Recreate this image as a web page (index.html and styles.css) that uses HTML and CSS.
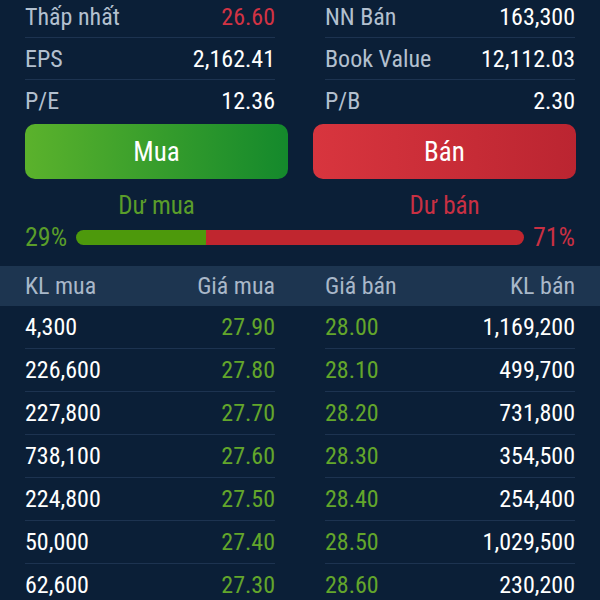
FILE: index.html
```html
<!DOCTYPE html>
<html lang="vi">
<head>
  <meta charset="UTF-8">
  <title>Chi tiết mã</title>
  <meta name="viewport" content="width=device-width, initial-scale=1">
  <link rel="stylesheet" href="styles.css">
</head>
<body>
  <div class="screen">
    <div class="stats">
      <div class="stat"><span class="label">Thấp nhất</span><span class="value down">26.60</span></div>
      <div class="stat"><span class="label">NN Bán</span><span class="value">163,300</span></div>
      <div class="stat"><span class="label">EPS</span><span class="value">2,162.41</span></div>
      <div class="stat"><span class="label">Book Value</span><span class="value">12,112.03</span></div>
      <div class="stat last"><span class="label">P/E</span><span class="value">12.36</span></div>
      <div class="stat last"><span class="label">P/B</span><span class="value">2.30</span></div>
    </div>

    <div class="actions">
      <button class="btn btn-buy">Mua</button>
      <button class="btn btn-sell">Bán</button>
    </div>

    <div class="balance">
      <div class="balance-labels">
        <span class="buy-text">Dư mua</span>
        <span class="sell-text">Dư bán</span>
      </div>
      <div class="balance-bar">
        <span class="pct buy-text">29%</span>
        <div class="bar">
          <div class="bar-buy" style="width:29%"></div>
          <div class="bar-sell"></div>
        </div>
        <span class="pct sell-text">71%</span>
      </div>
    </div>

    <div class="book-head">
      <div class="half"><span>KL mua</span><span>Giá mua</span></div>
      <div class="half"><span>Giá bán</span><span>KL bán</span></div>
    </div>
    <div class="book" id="book"></div>
  </div>

  <script>
    const rows = [
      ['4,300', '27.90', '28.00', '1,169,200'],
      ['226,600', '27.80', '28.10', '499,700'],
      ['227,800', '27.70', '28.20', '731,800'],
      ['738,100', '27.60', '28.30', '354,500'],
      ['224,800', '27.50', '28.40', '254,400'],
      ['50,000', '27.40', '28.50', '1,029,500'],
      ['62,600', '27.30', '28.60', '230,200']
    ];
    let html = '';
    rows.forEach(function(r) {
      html += `<div class='book-row'>` +
              `<div class='half'><span class='qty'>${r[0]}</span><span class='price'>${r[1]}</span></div>` +
              `<div class='half'><span class='price'>${r[2]}</span><span class='qty'>${r[3]}</span></div>` +
              `</div>`;
    });
    document.getElementById('book').innerHTML = html;
  </script>
</body>
</html>
```

FILE: styles.css
```css
body {
  margin: 0;
  padding: 0;
  background: #0b1f37;
  font-family: 'Roboto', 'Liberation Sans', sans-serif;
  font-stretch: 85%;
  color: #fff;
}
.screen {
  width: 600px;
  height: 600px;
  overflow: hidden;
  background: #0b1f37;
}
.stats {
  display: grid;
  grid-template-columns: 1fr 1fr;
  column-gap: 50px;
  padding: 0 25px;
  margin-top: -4px;
}
.stat {
  display: flex;
  justify-content: space-between;
  align-items: center;
  height: 41px;
  border-bottom: 1px solid #1d3350;
  font-size: 24px;
}
.stat.last {
  border-bottom: none;
  height: 42px;
}
.label {
  color: #b3c0cf;
}
.value {
  color: #fff;
}
.value.down {
  color: #d23344;
}
.actions {
  display: grid;
  grid-template-columns: 263px 263px;
  column-gap: 25px;
  padding: 0 25px;
  margin-top: 2px;
}
.btn {
  height: 55px;
  border: none;
  border-radius: 10px;
  color: #fff;
  font-family: inherit;
  font-stretch: 85%;
  font-size: 27px;
  padding: 0;
}
.btn-buy {
  background: linear-gradient(90deg, #5bb22c 0%, #14892c 100%);
}
.btn-sell {
  background: linear-gradient(90deg, #d8353e 0%, #bb2531 100%);
}
.balance {
  padding: 0 25px;
}
.balance-labels {
  display: grid;
  grid-template-columns: 263px 263px;
  column-gap: 25px;
  height: 30px;
  margin-top: 11px;
  align-items: center;
  text-align: center;
  font-size: 25px;
}
.balance-bar {
  display: flex;
  align-items: center;
  gap: 9px;
  height: 30px;
  margin-top: 2px;
}
.pct {
  font-size: 26px;
}
.buy-text {
  color: #5a9d2a;
}
.sell-text {
  color: #c93043;
}
.bar {
  flex: 1;
  display: flex;
  height: 15px;
  border-radius: 8px;
  overflow: hidden;
}
.bar-buy {
  background: #4d990c;
}
.bar-sell {
  flex: 1;
  background: #c0262f;
}
.book-head {
  display: grid;
  grid-template-columns: 1fr 1fr;
  column-gap: 50px;
  padding: 0 25px;
  height: 40px;
  margin-top: 14px;
  background: #1d3550;
  align-items: center;
  font-size: 24px;
  color: #a9b8c9;
}
.half {
  display: flex;
  justify-content: space-between;
  align-items: center;
}
.book-row {
  display: grid;
  grid-template-columns: 1fr 1fr;
  column-gap: 50px;
  padding: 0 25px;
  font-size: 24px;
}
.book-row .half {
  height: 42px;
  border-bottom: 1px solid #1d3350;
}
.qty {
  color: #fff;
}
.price {
  color: #63a62b;
}
```
